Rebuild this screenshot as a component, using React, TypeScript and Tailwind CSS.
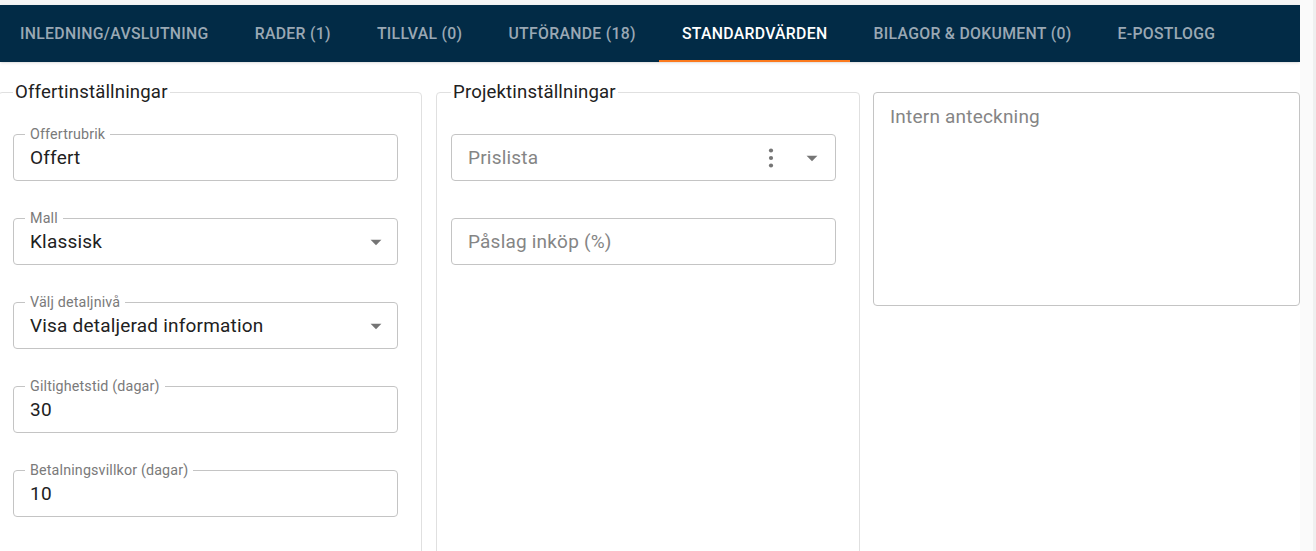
import React from 'react';

const tabs = [
  { label: 'INLEDNING/AVSLUTNING' },
  { label: 'RADER (1)' },
  { label: 'TILLVAL (0)' },
  { label: 'UTFÖRANDE (18)' },
  { label: 'STANDARDVÄRDEN', active: true },
  { label: 'BILAGOR & DOKUMENT (0)' },
  { label: 'E-POSTLOGG' },
];

// liten triangel som i MUI:s ArrowDropDown
const DropArrow = () => (
  <svg width="26" height="26" viewBox="0 0 24 24" className="shrink-0 text-[#757575]">
    <path d="M7 10l5 5 5-5z" fill="currentColor" />
  </svg>
);

const Kebab = () => (
  <svg width="8" height="24" viewBox="0 0 8 24" className="shrink-0 text-[#757575]">
    <circle cx="4" cy="4.5" r="2.1" fill="currentColor" />
    <circle cx="4" cy="12" r="2.1" fill="currentColor" />
    <circle cx="4" cy="19.5" r="2.1" fill="currentColor" />
  </svg>
);

type FieldProps = {
  label?: string;
  value?: string;
  placeholder?: string;
  select?: boolean;
  menu?: boolean;
};

function Field({ label, value, placeholder, select, menu }: FieldProps) {
  return (
    <div className="relative h-[47px] w-[385px] shrink-0 rounded-[4px] border border-[#c4c4c4] flex items-center pl-[16px] pr-[8px]">
      {label && (
        <span className="absolute -top-[9px] left-[11px] bg-white px-[5px] text-[14.3px] leading-[16px] tracking-[0.15px] text-[#7a7a7a]">
          {label}
        </span>
      )}
      <span className={`flex-1 text-[19px] leading-[24px] tracking-[0.2px] ${value ? 'text-[#212121]' : 'text-[#858585]'}`}>
        {value ?? placeholder}
      </span>
      {menu && (
        <div className="mr-[24px]">
          <Kebab />
        </div>
      )}
      {select && (
        <div className={menu ? 'mr-[2px]' : ''}>
          <DropArrow />
        </div>
      )}
    </div>
  );
}

function Group({ title, children, className = '' }: { title: string; children: React.ReactNode; className?: string }) {
  return (
    <fieldset className={`w-[424px] h-[500px] shrink-0 rounded-[4px] border border-[#e0e0e0] pl-[14px] pr-[23px] ${className}`}>
      <legend className="px-[2px] text-[18.6px] leading-[20px] tracking-[0.15px] text-[#212121]">{title}</legend>
      <div className="mt-[32px] flex flex-col gap-[37px]">{children}</div>
    </fieldset>
  );
}

export default function App() {
  return (
    <div className="h-[551px] overflow-hidden bg-[#f5f5f5] flex font-['Roboto',sans-serif]">
      <div className="mt-[5px] w-[1300px] shrink-0 bg-white flex flex-col">
        {/* TABBAR */}
        <nav className="h-[57px] shrink-0 bg-[#022b46] flex items-stretch shadow-sm">
          <div className="-ml-[3px] flex items-stretch">
            {tabs.map((t) => (
              <div
                key={t.label}
                className={`relative flex items-center px-[23px] text-[15.8px] font-medium tracking-[0.3px] whitespace-nowrap ${
                  t.active ? 'text-white' : 'text-[#9aa8b4]'
                }`}
              >
                {t.label}
                {t.active && <span className="absolute bottom-0 left-0 right-0 h-[2px] bg-[#fb7a1e]" />}
              </div>
            ))}
          </div>
        </nav>

        {/* INNEHÅLL */}
        <div className="mt-[20px] flex items-start shrink-0">
          <Group title="Offertinställningar" className="-ml-[2px]">
            <Field label="Offertrubrik" value="Offert" />
            <Field label="Mall" value="Klassisk" select />
            <Field label="Välj detaljnivå" value="Visa detaljerad information" select />
            <Field label="Giltighetstid (dagar)" value="30" />
            <Field label="Betalningsvillkor (dagar)" value="10" />
          </Group>

          <Group title="Projektinställningar" className="ml-[14px]">
            <Field placeholder="Prislista" select menu />
            <Field placeholder="Påslag inköp (%)" />
          </Group>

          <div className="ml-[13px] mt-[10px] h-[214px] w-[427px] rounded-[4px] border border-[#c4c4c4] px-[16px] pt-[12px]">
            <span className="text-[19px] leading-[24px] tracking-[0.2px] text-[#858585]">Intern anteckning</span>
          </div>
        </div>
      </div>
      <div className="w-[13px] shrink-0 bg-[#fafafa]" />
      <div className="flex-1 bg-[#efefef]" />
    </div>
  );
}
